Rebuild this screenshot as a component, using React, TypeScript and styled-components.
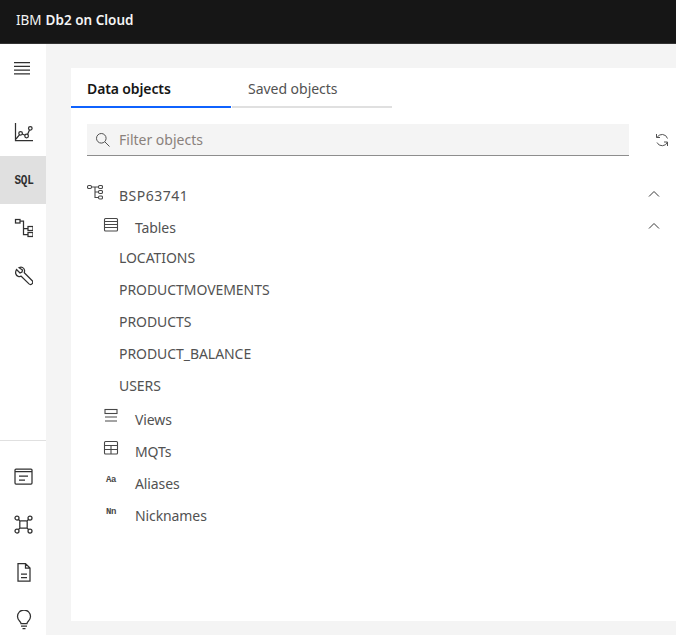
import React from "react";
import styled, { createGlobalStyle } from "styled-components";

const Global = createGlobalStyle`
  html, body { margin: 0; padding: 0; height: 100%; overflow: hidden; background: #f4f4f4; }
  #root { height: 100%; }
  * { box-sizing: border-box; }
`;
const Page = styled.div`
  height: 635px; width: 676px; display: flex; flex-direction: column; overflow: hidden;
  font-family: "Noto Sans", "Liberation Sans", sans-serif; color: #393939;
`;
const Header = styled.header`
  height: 44px; flex: none; background: #161616; border-bottom: 1px solid #333;
  display: flex; align-items: center; padding: 0 0 3px 16px; color: #f4f4f4; font-size: 13.5px;
  b { font-weight: 600; margin-left: 4px; }
`;
const Body = styled.div`flex: 1; display: flex; min-height: 0;`;
const Side = styled.nav`
  width: 46px; flex: none; background: #fff; display: flex; flex-direction: column; color: #303030;
`;
const SideGroup = styled.div<{ $top?: number }>`
  display: flex; flex: none; flex-direction: column; padding-top: ${(p) => p.$top ?? 0}px;
`;
const SideItem = styled.div<{ $active?: boolean }>`
  height: 48px; flex: none; display: flex; align-items: center; justify-content: center;
  background: ${(p) => (p.$active ? "#e0e0e0" : "transparent")};
`;
const SqlLabel = styled.span`
  font: 700 11px "Liberation Mono", monospace; color: #303030; letter-spacing: -0.2px;
  transform: translateX(1px) scaleY(1.2);
`;
const SideDivider = styled.div`
  flex: none; height: 1px; background: #e0e0e0; margin-top: 140px; margin-bottom: 11px;
`;
const Main = styled.main`flex: 1; min-width: 0; padding: 24px 0 14px 25px; display: flex;`;
const Panel = styled.section`flex: 1; min-width: 0; background: #fff; display: flex; flex-direction: column;`;
const Tabs = styled.div`display: flex; gap: 1px; flex: none;`;
const Tab = styled.div<{ $active?: boolean }>`
  width: 160px; height: 40px; padding: 11px 0 0 16px; font-size: 14px; line-height: 20px;
  font-weight: ${(p) => (p.$active ? 600 : 400)};
  color: ${(p) => (p.$active ? "#161616" : "#525252")};
  border-bottom: 2px solid ${(p) => (p.$active ? "#0f62fe" : "#e0e0e0")};
  letter-spacing: ${(p) => (p.$active ? "-0.12px" : "-0.03px")};
`;
const SearchRow = styled.div`display: flex; align-items: center; padding: 16px 0 0 16px; flex: none;`;
const Search = styled.div`
  width: 542px; height: 32px; background: #f4f4f4; border-bottom: 1px solid #8d8d8d;
  display: flex; align-items: center; gap: 8px; padding: 0 0 0 8px; font-size: 14px; color: #8a817c;
`;
const Refresh = styled.div`margin-left: 25px; display: flex; color: #525252;`;
const Tree = styled.div`display: flex; flex-direction: column; padding: 23px 14px 0 16px; flex: none;`;
const Row = styled.div<{ $indent: number; $top?: number; $wide?: boolean }>`
  height: 32px; display: flex; align-items: center;
  margin-top: ${(p) => p.$top ?? 0}px;
  padding-left: ${(p) => p.$indent}px; font-size: 14px; color: #525252;
  letter-spacing: ${(p) => (p.$wide ? "0.5px" : "-0.1px")};
`;
const RowIcon = styled.span<{ $w: number; $shift?: number }>`
  width: ${(p) => p.$w}px; flex: none; display: flex; color: #484848;
  transform: translateY(${(p) => p.$shift ?? -3}px);
`;
const Chevron = styled.span`margin-left: auto; display: flex; color: #393939; transform: translateY(-1px);`;
const Leaf = styled.div<{ $top?: number }>`
  height: 32px; padding-left: 32px; display: flex; align-items: center; font-size: 14px; color: #525252;
  letter-spacing: -0.06px; margin-top: ${(p) => p.$top ?? 0}px;
`;
const TinyGlyph = styled.span`
  font: 700 9px "Liberation Mono", monospace; color: #484848; width: 16px; text-align: center; letter-spacing: -0.3px;
  transform: scaleY(1.1);
`;

const Ic: React.FC<{ children: React.ReactNode }> = ({ children }) => (
  <svg width={20} height={20} viewBox="0 0 20 20" fill="none" stroke="currentColor" strokeWidth={1.25}>{children}</svg>
);
const Ic16: React.FC<{ children: React.ReactNode }> = ({ children }) => (
  <svg width={16} height={16} viewBox="0 0 16 16" fill="none" stroke="currentColor" strokeWidth={1.1}>{children}</svg>
);

const up = <svg width="16" height="16" viewBox="0 0 16 16" fill="none" stroke="currentColor" strokeWidth="1"><path d="M3 10.500L8 5.500l5 5" /></svg>;

const leaves = ["PRODUCTMOVEMENTS", "PRODUCTS", "PRODUCT_BALANCE", "USERS"];

export default function App() {
  return (
    <Page>
      <Global />
      <Header>IBM <b>Db2 on Cloud</b></Header>
      <Body>
        <Side>
          <SideGroup>
            <SideItem>
              <Ic><path d="M1 4.500h16M1 8.300h16M1 12.100h16M1 15.900h16" /></Ic>
            </SideItem>
          </SideGroup>
          <SideGroup $top={16}>
            <SideItem>
              <Ic>
                <path d="M2.500 1v17.500H20" />
                <circle cx="7.600" cy="11.300" r="1.800" /><circle cx="13.600" cy="14" r="1.800" /><circle cx="17.300" cy="6.300" r="1.800" />
                <path d="M3 17l3.600-4.300M9.200 12l2.800 1.300M14.500 12.400l2-4.400" />
              </Ic>
            </SideItem>
            <SideItem $active><SqlLabel>SQL</SqlLabel></SideItem>
            <SideItem>
              <Ic>
                <rect x="2.500" y="1.500" width="4.500" height="3.500" /><rect x="15" y="8.500" width="5" height="4" /><rect x="15" y="14.500" width="5" height="4" />
                <path d="M7 3h3.500v13.500H15M10.500 10.500H15" />
              </Ic>
            </SideItem>
            <SideItem>
              <Ic>
                <path d="M3.500 3.500L7 7l2-1 .5-2L6 1.700C8.500.5 11 1.500 11.500 4c.2 1-.1 2-.2 2.700L19 14.500c1 1 1 2.200.2 3.200s-2.200 1.100-3.200.2L8.200 10.200c-.8.300-2 .4-3 .1C2.700 9.500 1.800 6.500 3.500 3.500z" />
              </Ic>
            </SideItem>
          </SideGroup>
          <SideDivider />
          <SideGroup>
            <SideItem>
              <Ic>
                <rect x="2" y="3" width="17" height="15" rx="1" /><path d="M2 5.500h17M6 10h9M6 14h6" />
              </Ic>
            </SideItem>
            <SideItem>
              <Ic>
                <circle cx="4" cy="4" r="2" /><circle cx="17" cy="4" r="2" /><circle cx="4" cy="17" r="2" /><circle cx="17" cy="17" r="2" />
                <rect x="6.800" y="6.800" width="7.400" height="7.400" rx="1" /><path d="M5.500 5.500l1.500 1.500M15.500 5.500L14 7M5.500 15.500L7 14M15.500 15.500L14 14" />
              </Ic>
            </SideItem>
            <SideItem>
              <Ic>
                <path d="M5 1.500h7.500l4.500 4.500v13H5zM12.500 1.500V6H17M8 12h6M8 15.500h6" />
              </Ic>
            </SideItem>
            <SideItem>
              <Ic>
                <path d="M8 13.500c0-2-3.500-3-3.500-7a6.500 6.500 0 0 1 13 0c0 4-3.500 5-3.500 7zM8 16h6M9.500 18.500h3" />
              </Ic>
            </SideItem>
          </SideGroup>
        </Side>
        <Main>
          <Panel>
            <Tabs>
              <Tab $active>Data objects</Tab>
              <Tab>Saved objects</Tab>
            </Tabs>
            <SearchRow>
              <Search>
                <svg width="16" height="16" viewBox="0 0 16 16" fill="none" stroke="#525252" strokeWidth="1"><circle cx="6.300" cy="6.300" r="4.800" /><path d="M9.800 9.800L14.500 14.500" /></svg>
                Filter objects
              </Search>
              <Refresh>
                <svg width="16" height="16" viewBox="0 0 16 16" fill="none" stroke="currentColor" strokeWidth="1">
                  <path d="M3 5.500a5.700 5.700 0 0 1 10.500 1M13.500 10a5.700 5.700 0 0 1-10.500.5M2.500 2v3.500H6M13.500 14v-4H10" />
                </svg>
              </Refresh>
            </SearchRow>
            <Tree>
              <Row $indent={0} $wide>
                <RowIcon $w={32}>
                  <Ic16>
                    <rect x="0.500" y="1.500" width="4" height="3" rx="1.200" /><rect x="11.500" y="1.500" width="4" height="3" rx="1.200" />
                    <rect x="11.500" y="6.500" width="4" height="3" rx="1.200" /><rect x="11.500" y="12" width="4" height="3" rx="1.200" />
                    <path d="M4.500 3h7M8 3v10.500h3.500M8 8h3.500" />
                  </Ic16>
                </RowIcon>BSP63741
                <Chevron>{up}</Chevron>
              </Row>
              <Row $indent={16}>
                <RowIcon $w={32} $shift={-2}>
                  <Ic16>
                    <rect x="1.500" y="1.500" width="13" height="12.500" rx="1" /><path d="M1.500 4.500h13M1.500 7.500h13M1.500 10.500h13" />
                  </Ic16>
                </RowIcon>Tables
                <Chevron>{up}</Chevron>
              </Row>
              <Leaf $top={-2}>LOCATIONS</Leaf>
              {leaves.map((name) => <Leaf key={name}>{name}</Leaf>)}
              <Row $indent={16} $top={2}>
                <RowIcon $w={32}>
                  <Ic16>
                    <rect x="2" y="1.500" width="12" height="4" /><path d="M2 9h12M2 13h12" />
                  </Ic16>
                </RowIcon>Views
              </Row>
              <Row $indent={16}>
                <RowIcon $w={32}>
                  <Ic16>
                    <rect x="1.500" y="1.500" width="13" height="12.500" rx="1" /><path d="M1.500 5.500h13M8 5.500v8.500M1.500 9.500h13" />
                  </Ic16>
                </RowIcon>MQTs
              </Row>
              <Row $indent={16}>
                <RowIcon $w={32}><TinyGlyph>Aa</TinyGlyph></RowIcon>Aliases
              </Row>
              <Row $indent={16}>
                <RowIcon $w={32}><TinyGlyph>Nn</TinyGlyph></RowIcon>Nicknames
              </Row>
            </Tree>
          </Panel>
        </Main>
      </Body>
    </Page>
  );
}
